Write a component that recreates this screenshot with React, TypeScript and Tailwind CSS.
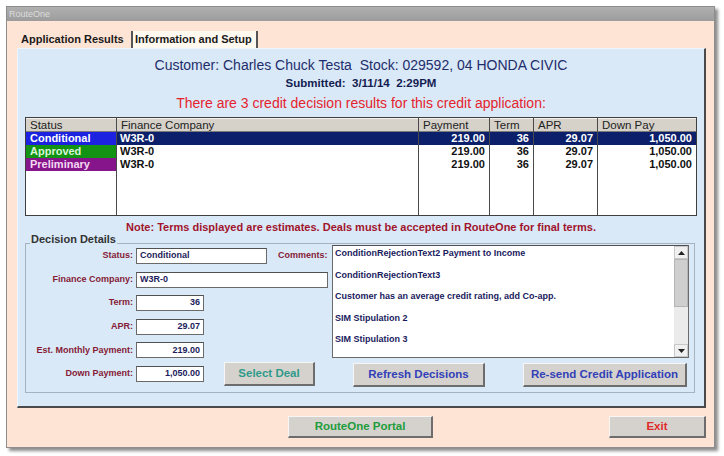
import React from 'react';

type Row = {
  status: string;
  statusCls: string;
  company: string;
  payment: string;
  term: string;
  apr: string;
  down: string;
  selected: boolean;
};

const rows: Row[] = [
  { status: 'Conditional', statusCls: 'bg-[#1c22e0] text-white', company: 'W3R-0', payment: '219.00', term: '36', apr: '29.07', down: '1,050.00', selected: true },
  { status: 'Approved', statusCls: 'bg-[#139313] text-[#d8f5d8]', company: 'W3R-0', payment: '219.00', term: '36', apr: '29.07', down: '1,050.00', selected: false },
  { status: 'Preliminary', statusCls: 'bg-[#86158c] text-[#f3d8f0]', company: 'W3R-0', payment: '219.00', term: '36', apr: '29.07', down: '1,050.00', selected: false },
];

const comments = [
  'ConditionRejectionText2 Payment to Income',
  'ConditionRejectionText3',
  'Customer has an average credit rating, add Co-app.',
  'SIM Stipulation 2',
  'SIM Stipulation 3',
];

function HeaderCell({ title }: { title: string }) {
  return (
    <div className="h-[14px] shrink-0 bg-[#d6d2ca] border-b border-b-[#7a7a7a] border-t border-t-[#f2f2f2] pl-[4px] text-[11.5px] leading-[12px] text-[#222]">
      {title}
    </div>
  );
}

function Column({
  title,
  width,
  field,
  right,
  last,
}: {
  title: string;
  width: string;
  field: 'company' | 'payment' | 'term' | 'apr' | 'down';
  right?: boolean;
  last?: boolean;
}) {
  return (
    <div className={`flex flex-col ${width} ${last ? '' : 'border-r border-r-[#4a4a4a]'}`}>
      <HeaderCell title={title} />
      {rows.map((r, i) => (
        <div
          key={i}
          className={`h-[13px] text-[11px] leading-[13px] font-bold ${right ? 'text-right pr-[4px]' : 'pl-[3px]'} ${
            r.selected ? 'bg-[#0b1f6b] text-white' : 'text-[#111]'
          }`}
        >
          {r[field]}
        </div>
      ))}
    </div>
  );
}

function Field({
  label,
  value,
  width,
  right,
  children,
}: {
  label: string;
  value: string;
  width: string;
  right?: boolean;
  children?: React.ReactNode;
}) {
  return (
    <div className="flex h-[16px] items-center">
      <div className="w-[107px] text-right text-[9px] font-bold text-[#861a36]">{label}</div>
      <div
        className={`ml-[3px] flex h-[16px] shrink-0 items-center border border-[#6a6a6a] border-t-[#505050] bg-white px-[3px] text-[9px] font-bold text-[#1c1c5c] ${width} ${
          right ? 'justify-end' : ''
        }`}
      >
        {value}
      </div>
      {children}
    </div>
  );
}

function WinButton({ label, className }: { label: string; className: string }) {
  return (
    <button
      className={`flex shrink-0 items-center justify-center border-l border-t border-l-[#f6f6f6] border-t-[#f6f6f6] border-b-2 border-r-2 border-b-[#6d6d6d] border-r-[#6d6d6d] bg-[#d5d2cd] text-[11.5px] font-bold ${className}`}
    >
      {label}
    </button>
  );
}

function Arrow({ up }: { up?: boolean }) {
  return (
    <div className="flex h-[13px] items-center justify-center border border-[#c8c8c8] bg-[#f0f0f0]">
      <svg width="7" height="4" viewBox="0 0 7 4">
        {up ? <polygon points="0,4 7,4 3.5,0" fill="#222" /> : <polygon points="0,0 7,0 3.5,4" fill="#222" />}
      </svg>
    </div>
  );
}

export default function App() {
  return (
    <div className="h-[456px] w-[724px] overflow-hidden bg-white pl-[6px] pt-[6px] font-['Liberation_Sans',Arial,sans-serif]">
      <div className="flex h-[442px] w-[709px] flex-col border border-[#8d8d8d] shadow-[3px_3px_3px_rgba(0,0,0,0.45)]">
        {/* title bar */}
        <div className="flex h-[14px] shrink-0 items-center bg-gradient-to-b from-[#b0b0b0] to-[#9c9c9c] pl-[2px] text-[9px] leading-[10px] text-[#dcdcdc]">
          RouteOne
        </div>

        <div className="flex flex-1 flex-col bg-[#fee4d5]">
          {/* tabs */}
          <div className="ml-[11px] mt-[10px] flex h-[17px] items-stretch">
            <div className="flex w-[113px] items-center pl-[3px] text-[11px] font-bold text-[#1a1a1a]">Application Results</div>
            <div className="w-[2px] bg-[#555]" />
            <div className="flex w-[123px] items-center bg-[#fff9f0] pl-[2px] text-[11px] font-bold text-[#1a1a1a]">
              Information and Setup
            </div>
            <div className="w-[2px] bg-[#555]" />
          </div>

          {/* panel */}
          <div className="ml-[10px] flex h-[360px] w-[689px] flex-col border-l border-t border-l-[#eef5fc] border-t-[#eef5fc] border-b-2 border-r-2 border-b-[#4a4a4a] border-r-[#4a4a4a] bg-[#d9e9f8]">
            <div className="mt-[8px] h-[16px] text-center text-[14px] leading-[16px] text-[#1f2d6b]">
              Customer: Charles Chuck Testa&nbsp; Stock: 029592, 04 HONDA CIVIC
            </div>
            <div className="mt-[4px] h-[12px] text-center text-[11.5px] font-bold leading-[12px] text-[#141c50]">
              Submitted:&nbsp; 3/11/14&nbsp; 2:29PM
            </div>
            <div className="mt-[7px] h-[14px] text-center text-[14px] leading-[14px] text-[#e5232d]">
              There are 3 credit decision results for this credit application:
            </div>

            {/* results grid */}
            <div className="ml-[7px] mt-[7px] flex h-[99px] w-[672px] border border-[#3f3f3f] bg-white">
              <div className="flex w-[91px] flex-col border-r border-r-[#4a4a4a]">
                <HeaderCell title="Status" />
                {rows.map((r, i) => (
                  <div key={i} className={`h-[13px] pl-[4px] text-[11px] font-bold leading-[13px] ${r.statusCls}`}>
                    {r.status}
                  </div>
                ))}
              </div>
              <Column title="Finance Company" width="w-[302px]" field="company" />
              <Column title="Payment" width="w-[71px]" field="payment" right />
              <Column title="Term" width="w-[44px]" field="term" right />
              <Column title="APR" width="w-[64px]" field="apr" right />
              <Column title="Down Pay" width="w-[98px]" field="down" right last />
            </div>

            <div className="mt-[5px] h-[12px] text-center text-[11px] font-bold leading-[12px] text-[#a1142c]">
              Note: Terms displayed are estimates. Deals must be accepted in RouteOne for final terms.
            </div>

            {/* decision details group */}
            <div className="relative ml-[7px] mt-[10px] flex h-[150px] w-[670px] items-start border border-[#a7b2bf]">
              <div className="absolute -top-[11px] left-[4px] bg-[#d9e9f8] px-[1px] text-[11px] font-bold leading-[12px] text-[#333]">
                Decision Details
              </div>

              <div className="flex w-[306px] shrink-0 flex-col gap-[7.6px] pt-[4px]">
                <Field label="Status:" value="Conditional" width="w-[131px]">
                  <div className="ml-[11px] text-[9px] font-bold text-[#861a36]">Comments:</div>
                </Field>
                <Field label="Finance Company:" value="W3R-0" width="w-[192px]" />
                <Field label="Term:" value="36" width="w-[68px]" right />
                <Field label="APR:" value="29.07" width="w-[68px]" right />
                <Field label="Est. Monthly Payment:" value="219.00" width="w-[68px]" right />
                <Field label="Down Payment:" value="1,050.00" width="w-[68px]" right>
                  <WinButton label="Select Deal" className="ml-[20px] h-[24px] w-[91px] text-[#2f9a8a]" />
                </Field>
              </div>

              <div className="flex flex-col pt-[1px]">
                <div className="flex h-[113px] w-[357px] border border-[#6a6a6a] border-t-[#505050] bg-white">
                  <div className="flex-1 pl-[2px]">
                    {comments.map((c) => (
                      <div key={c} className="h-[21.5px] text-[9px] font-bold leading-[14px] text-[#1a1a5e]">
                        {c}
                      </div>
                    ))}
                  </div>
                  <div className="flex w-[14px] flex-col bg-[#ebebeb]">
                    <Arrow up />
                    <div className="h-[48px] border border-[#b5b5b5] bg-[#cfcfcf]" />
                    <div className="flex-1" />
                    <Arrow />
                  </div>
                </div>
                <div className="mt-[5px] flex">
                  <WinButton label="Refresh Decisions" className="ml-[21px] h-[24px] w-[132px] text-[#3140b8]" />
                  <WinButton label="Re-send Credit Application" className="ml-[38px] h-[24px] w-[164px] text-[#3140b8]" />
                </div>
              </div>
            </div>
          </div>

          {/* bottom buttons */}
          <div className="mt-[8px] flex">
            <WinButton label="RouteOne Portal" className="ml-[281px] h-[22px] w-[145px] text-[#1f9c3c]" />
            <WinButton label="Exit" className="ml-[176px] h-[22px] w-[97px] text-[#e02a2a]" />
          </div>
        </div>
      </div>
    </div>
  );
}
